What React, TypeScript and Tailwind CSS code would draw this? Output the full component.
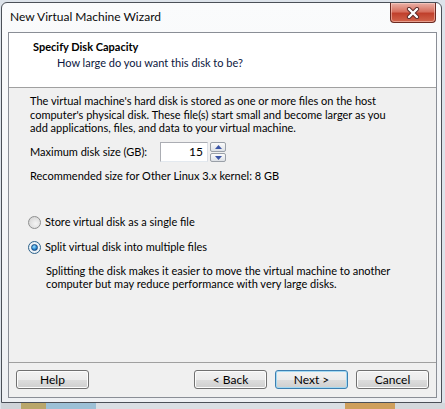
function CloseButton() {
  return (
    <div className="mr-[5px] w-[46px] h-[20px] rounded-b-[4px] border border-t-0 border-[#6b2a22] bg-[linear-gradient(#eab1a7_0%,#d7705f_45%,#c0402c_55%,#d2654c_100%)] flex items-center justify-center shadow-[inset_0_0_0_1px_rgba(255,220,210,0.5)]">
      <svg width="14" height="12" viewBox="0 0 14 12">
        <path d="M3 2 L11 10 M11 2 L3 10" stroke="#5a2a28" strokeWidth="4.2" strokeLinecap="round" />
        <path d="M3 2 L11 10 M11 2 L3 10" stroke="#ffffff" strokeWidth="2.4" strokeLinecap="round" />
      </svg>
    </div>
  );
}

function Radio({ checked }: { checked?: boolean }) {
  return (
    <span
      className={
        "w-[13px] h-[13px] rounded-full border flex items-center justify-center shrink-0 " +
        (checked
          ? "border-[#2c628b] bg-[radial-gradient(circle,#ffffff,#dfe8f0)]"
          : "border-[#8e8f8f] bg-[radial-gradient(circle_at_60%_60%,#f4f4f4,#cfcfcf)]")
      }
    >
      {checked && (
        <span className="w-[7px] h-[7px] rounded-full bg-[radial-gradient(circle_at_40%_35%,#9ee2fb,#2a8ad4_55%,#0d3c7e)] border border-[#1a4d83]" />
      )}
    </span>
  );
}

function Button({ label, primary }: { label: string; primary?: boolean }) {
  return (
    <div
      className={
        "w-[73px] h-[19px] rounded-[3px] border flex items-center justify-center text-[12px] text-black bg-[linear-gradient(#f2f2f2_0%,#ebebeb_50%,#dddddd_51%,#cfcfcf_100%)] " +
        (primary
          ? "border-[#3c7fb1] shadow-[inset_0_0_0_1px_#a3d9f2]"
          : "border-[#707070] shadow-[inset_0_0_0_1px_#fcfcfc]")
      }
    >
      {label}
    </div>
  );
}

export default function App() {
  return (
    <div className="w-[445px] h-[409px] overflow-hidden bg-[#dde3ea] pt-[2px] pl-[1px] font-['Lato',sans-serif] text-[11px] text-black">
      <div className="w-[441px] h-[401px] border border-[#4b5058] rounded-t-[6px] bg-[linear-gradient(#fafbfc,#eef0f3)] flex flex-col">
        {/* title bar */}
        <div className="h-[29px] flex items-start justify-between">
          <span className="ml-[8px] mt-[6px] text-[12px] leading-[16px] text-[#0a0a0a]">New Virtual Machine Wizard</span>
          <CloseButton />
        </div>

        {/* client area */}
        <div className="ml-[6px] w-[429px] h-[366px] border border-[#8a8e96] bg-[#f0f0f0] flex flex-col">
          <div className="h-[54px] bg-white pt-[7px] flex flex-col">
            <span className="pl-[24px] font-bold leading-[14px]">Specify Disk Capacity</span>
            <span className="pl-[48px] mt-[2px] leading-[14px] text-[#0b1640]">How large do you want this disk to be?</span>
          </div>
          <div className="h-px bg-[#a0a0a0]" />

          <div className="flex-1 pt-[6px] pl-[21px] flex flex-col">
            <p className="leading-[13.5px] w-[368px]">
              The virtual machine's hard disk is stored as one or more files on the host computer's physical disk. These file(s) start small and become larger as you add applications, files, and data to your virtual machine.
            </p>

            <div className="mt-[7px] h-[21px] flex items-center">
              <span className="w-[130px]">Maximum disk size (GB):</span>
              <div className="w-[48px] h-[20px] border border-[#abadb3] border-b-[#e3e9ef] border-r-[#dbdfe6] bg-white flex items-center justify-end pr-[4px] text-[12px]">
                15
              </div>
              <div className="ml-[2px] w-[16px] h-[20px] flex flex-col gap-px">
                <div className="h-[10px] rounded-[2px] border border-[#9aa0a8] bg-[linear-gradient(#fbfbfb,#dde1e6)] flex items-center justify-center">
                  <svg width="7" height="4" viewBox="0 0 7 4"><path d="M0 4 L3.5 0 L7 4 Z" fill="#3d56a6" /></svg>
                </div>
                <div className="h-[9px] rounded-[2px] border border-[#9aa0a8] bg-[linear-gradient(#fbfbfb,#dde1e6)] flex items-center justify-center">
                  <svg width="7" height="4" viewBox="0 0 7 4"><path d="M0 0 L7 0 L3.5 4 Z" fill="#3d56a6" /></svg>
                </div>
              </div>
            </div>

            <span className="mt-[6px] leading-[14px]">Recommended size for Other Linux 3.x kernel: 8 GB</span>

            <div className="mt-[33px] h-[14px] flex items-center gap-[4px] -ml-[2px]">
              <Radio />
              <span>Store virtual disk as a single file</span>
            </div>
            <div className="mt-[11px] h-[14px] flex items-center gap-[4px] -ml-[2px]">
              <Radio checked />
              <span>Split virtual disk into multiple files</span>
            </div>
            <p className="mt-[9px] ml-[16px] leading-[13px] w-[370px]">
              Splitting the disk makes it easier to move the virtual machine to another computer but may reduce performance with very large disks.
            </p>
          </div>

          <div className="h-px bg-[#a0a0a0]" />
          <div className="h-[34px] pt-[7px] px-[7px] flex items-start">
            <Button label="Help" />
            <div className="flex-1" />
            <div className="flex gap-[8px]">
              <Button label="< Back" />
              <Button label="Next >" primary />
              <Button label="Cancel" />
            </div>
          </div>
        </div>
      </div>
      <div className="h-[6px] flex">
        <div className="w-[20px] bg-[#cfd3d8]" />
        <div className="w-[25px] bg-[#b9a66a]" />
        <div className="w-[50px] bg-[#9cc0d6]" />
        <div className="flex-1 bg-[#dadee3]" />
        <div className="w-[50px] bg-[#cf9f5c]" />
        <div className="w-[50px] bg-[#d4d8dc]" />
      </div>
    </div>
  );
}
